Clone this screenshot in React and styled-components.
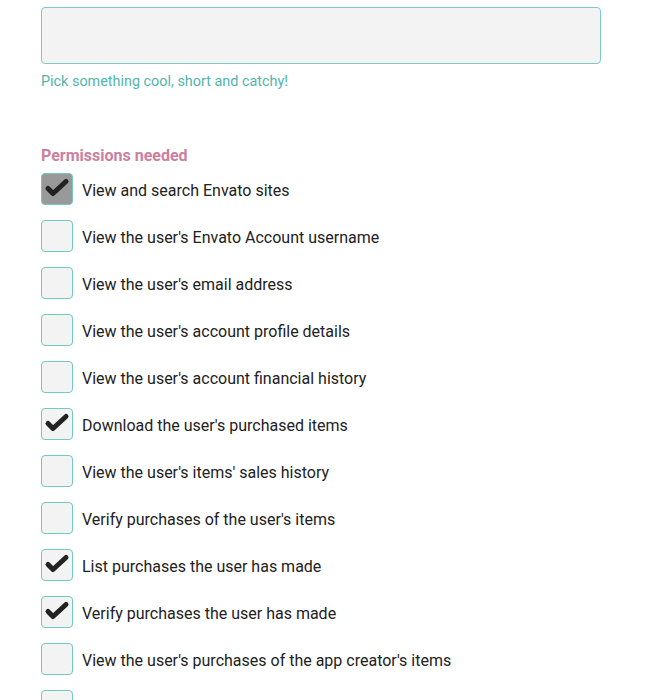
import React from "react";
import styled, { createGlobalStyle } from "styled-components";

const Global = createGlobalStyle`
  html, body { margin: 0; padding: 0; background: #fff; }
  body { font-family: Roboto, "Noto Sans", Arial, sans-serif; }
`;

const Page = styled.div`
  padding: 7px 49px 0 41px;
  width: 560px;
`;

const TextInput = styled.input`
  display: block;
  box-sizing: border-box;
  width: 560px;
  height: 57px;
  background: #f3f3f3;
  border: 1px solid #7ccbc6;
  border-radius: 4px;
  outline: none;
  padding: 0 12px;
  font: 16px Roboto, sans-serif;
`;

const Hint = styled.p`
  margin: 9px 0 0;
  color: #52b5ad;
  font-size: 14.4px;
  line-height: 18px;
`;

const SectionTitle = styled.h3`
  margin: 55px 0 0;
  color: #cc7f9f;
  font-size: 16px;
  font-weight: 700;
  line-height: 20px;
`;

const List = styled.ul`
  list-style: none;
  margin: 7px 0 0;
  padding: 0;
  display: flex;
  flex-direction: column;
  gap: 15px;
`;

const Row = styled.li`
  display: flex;
  align-items: center;
  gap: 9px;
  height: 32px;
`;

const Box = styled.span`
  box-sizing: border-box;
  flex: none;
  width: 32px;
  height: 32px;
  border: 1px solid #72c9c2;
  border-radius: 4px;
  background: ${(p) => (p.$active ? "#999999" : "#f3f3f3")};
  display: flex;
  align-items: center;
  justify-content: center;
`;

const Label = styled.span`
  color: #222;
  font-size: 16px;
  line-height: 20px;
  padding-top: 3px;
`;

const Check = () => (
  <svg width="30" height="30" viewBox="0 0 30 30">
    <path d="M6 14.5 L11 19.5 L24 7.5" fill="none" stroke="#222" strokeWidth="5" strokeLinecap="round" strokeLinejoin="round" />
  </svg>
);

const items = [
  ["View and search Envato sites", true, true],
  ["View the user's Envato Account username", false],
  ["View the user's email address", false],
  ["View the user's account profile details", false],
  ["View the user's account financial history", false],
  ["Download the user's purchased items", true],
  ["View the user's items' sales history", false],
  ["Verify purchases of the user's items", false],
  ["List purchases the user has made", true],
  ["Verify purchases the user has made", true],
  ["View the user's purchases of the app creator's items", false],
  ["", false],
];

export default function App() {
  return (
    <Page>
      <Global />
      <TextInput type="text" />
      <Hint>Pick something cool, short and catchy!</Hint>
      <SectionTitle>Permissions needed</SectionTitle>
      <List>
        {items.map(([label, checked, active], i) => (
          <Row key={i}>
            <Box $active={active}>{checked && <Check />}</Box>
            <Label>{label}</Label>
          </Row>
        ))}
      </List>
    </Page>
  );
}
